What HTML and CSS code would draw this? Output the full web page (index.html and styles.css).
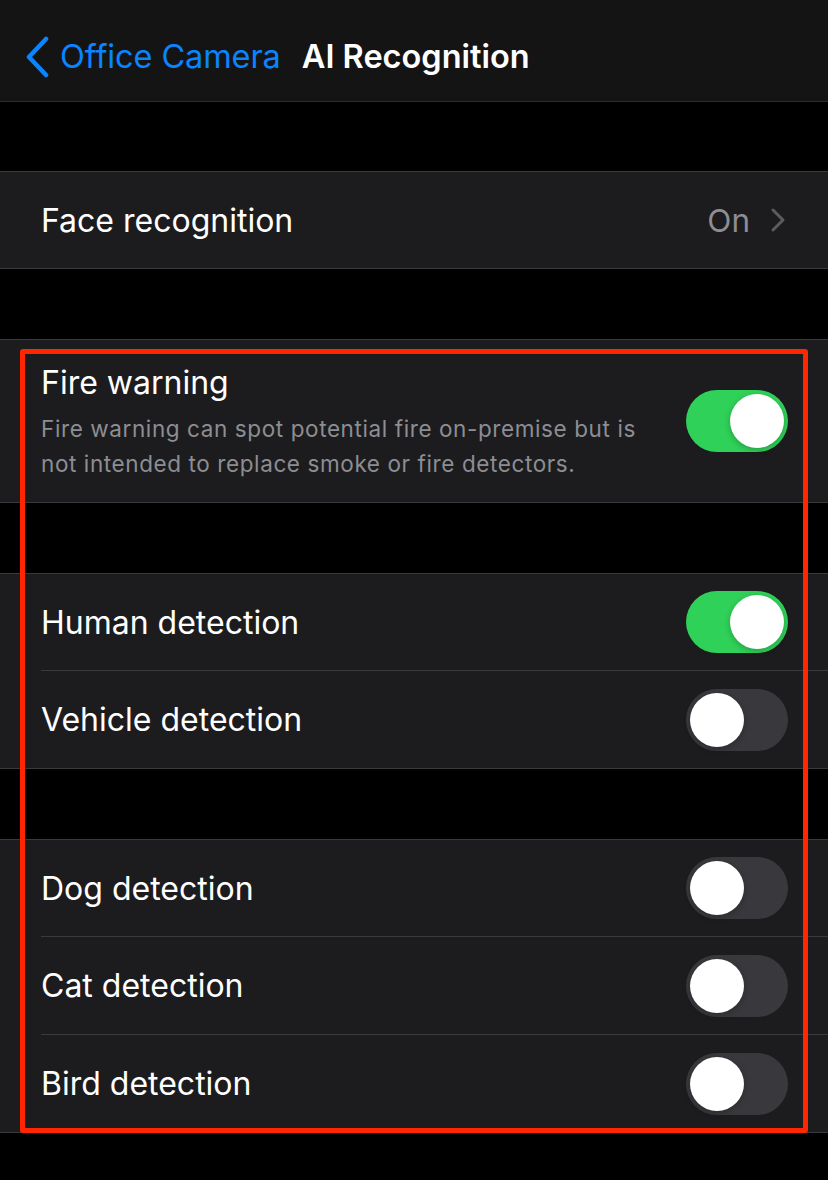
FILE: index.html
```html
<!DOCTYPE html>
<html>
<head>
<meta charset="utf-8">
<link rel="stylesheet" href="styles.css">
</head>
<body>
<div class="page">
  <header class="nav">
    <a class="back">
      <svg class="chev" width="26" height="42" viewBox="0 0 26 42"><path d="M22 3 L5 21 L22 39" fill="none" stroke="#0a84ff" stroke-width="4.5" stroke-linecap="round" stroke-linejoin="round"/></svg>
      <span>Office Camera</span>
    </a>
    <h1 class="title">AI Recognition</h1>
  </header>

  <section class="group first">
    <div class="row">
      <span class="label">Face recognition</span>
      <span class="value">On</span>
      <svg class="disc" width="16" height="26" viewBox="0 0 16 26"><path d="M3 3 L13 13 L3 23" fill="none" stroke="#5b5b60" stroke-width="3" stroke-linecap="round" stroke-linejoin="round"/></svg>
    </div>
  </section>

  <section class="group">
    <div class="row tall">
      <div class="text">
        <div class="label">Fire warning</div>
        <div class="desc">Fire warning can spot potential fire on-premise but is not intended to replace smoke or fire detectors.</div>
      </div>
      <span class="toggle on"><span class="knob"></span></span>
    </div>
  </section>

  <section class="group">
    <div class="row"><span class="label">Human detection</span><span class="toggle on"><span class="knob"></span></span></div>
    <div class="row"><span class="label">Vehicle detection</span><span class="toggle"><span class="knob"></span></span></div>
  </section>

  <section class="group">
    <div class="row"><span class="label">Dog detection</span><span class="toggle"><span class="knob"></span></span></div>
    <div class="row"><span class="label">Cat detection</span><span class="toggle"><span class="knob"></span></span></div>
    <div class="row"><span class="label">Bird detection</span><span class="toggle"><span class="knob"></span></span></div>
  </section>

  <div class="highlight"></div>
</div>
</body>
</html>
```

FILE: styles.css
```css
html, body {
  margin: 0;
  padding: 0;
  background: #000;
}
body {
  font-family: "Inter", "Roboto", "Liberation Sans", sans-serif;
  color: #fff;
  width: 828px;
  height: 1180px;
  overflow: hidden;
}
.page {
  position: relative;
  width: 828px;
  height: 1180px;
  background: #000;
}
.nav {
  height: 89px;
  padding-top: 12px;
  background: #141414;
  border-bottom: 1px solid #2c2c2e;
  display: flex;
  align-items: center;
}
.back {
  display: flex;
  align-items: center;
  margin-left: 24px;
  color: #0a84ff;
  font-size: 32.5px;
  letter-spacing: -0.1px;
}
.chev {
  margin-right: 10px;
  margin-top: 0;
}
.title {
  margin: 0 0 0 21px;
  font-size: 32.5px;
  font-weight: 600;
  letter-spacing: 0;
}
.group {
  margin-top: 70px;
  background: #1c1c1e;
  border-top: 1px solid #3a3a3c;
  border-bottom: 1px solid #3a3a3c;
}
.group.first {
  margin-top: 69px;
}
.row {
  position: relative;
  height: 96px;
  display: flex;
  align-items: center;
  padding: 0 40px 0 41px;
}
.row + .row {
  height: 97px;
  border-top: 1px solid #3a3a3c;
  margin-left: 41px;
  padding-left: 0;
}
.row.tall {
  height: 162px;
  align-items: center;
}
.label {
  flex: 1;
  font-size: 32px;
  letter-spacing: 0;
}
.text {
  flex: 1;
  margin-top: 1px;
}
.text .label {
  line-height: 40px;
}
.desc {
  margin-top: 8px;
  font-size: 22.5px;
  line-height: 35px;
  color: #8d8d93;
  width: 620px;
  letter-spacing: 0.6px;
}
.value {
  font-size: 31.5px;
  color: #8d8d93;
  margin-right: 20px;
}
.disc {
  margin-right: 2px;
}
.toggle {
  position: relative;
  width: 102px;
  height: 62px;
  border-radius: 31px;
  background: #39393d;
  flex: none;
}
.toggle.on {
  background: #30d158;
}
.knob {
  position: absolute;
  top: 4px;
  left: 4px;
  width: 54px;
  height: 54px;
  border-radius: 50%;
  background: #fff;
  box-shadow: 0 2px 6px rgba(0,0,0,0.25);
}
.toggle.on .knob {
  left: 44px;
}
.highlight {
  position: absolute;
  left: 20px;
  top: 349px;
  width: 778px;
  height: 774px;
  border: 5px solid #ff2600;
  border-radius: 3px;
  pointer-events: none;
}
```
